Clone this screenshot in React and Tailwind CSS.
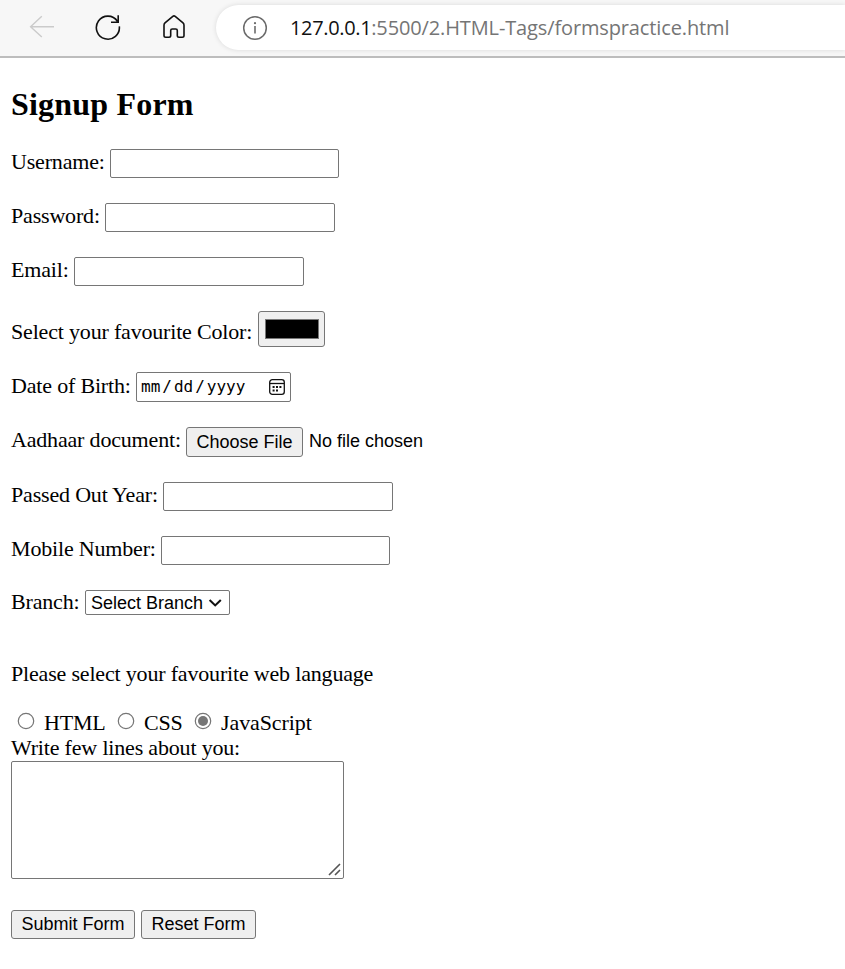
const serif = "font-['Liberation_Serif','Times_New_Roman',serif]";
const sans = "font-['Liberation_Sans',Arial,sans-serif]";

function Row({ label, labelClass, className, children }) {
  return (
    <div className={`flex items-start ${className}`}>
      <label className={`shrink-0 whitespace-nowrap leading-6 ${labelClass}`}>{label}</label>
      {children}
    </div>
  );
}

function TextBox({ type = "text", className }) {
  return <input type={type} className={`block h-[29px] shrink-0 rounded-[2px] border border-[#767676] bg-white px-1 outline-none ${className}`} />;
}

function Button({ className, children }) {
  return (
    <button type="button" className={`flex shrink-0 items-center justify-center whitespace-nowrap rounded-[3px] border border-[#767676] bg-[#efefef] text-[18px] leading-5 tracking-normal ${sans} ${className}`}>
      {children}
    </button>
  );
}

function Radio({ className, checked }) {
  return (
    <svg className={`mt-[1px] shrink-0 ${className}`} width="18" height="18" viewBox="0 0 18 18" fill="none">
      <circle cx="9" cy="9" r="7.7" stroke="#767676" strokeWidth="1.2" />
      {checked && <circle cx="9" cy="9" r="5" fill="#767676" />}
    </svg>
  );
}

function Toolbar() {
  return (
    <header className="flex h-[58px] items-start overflow-hidden border-b-2 border-[#bdbdbd] bg-[#f7f7f7] pt-[5px]">
      <svg className="ml-[28px] mt-[8px] shrink-0" width="28" height="28" viewBox="28 13 28 28" fill="none" stroke="#cbcbcb" strokeWidth="1.4">
        <path d="M41.8 16.3 30.6 26.7 41.8 37M30.6 26.7H54" />
      </svg>
      <svg className="ml-[38px] mt-[8px] shrink-0" width="28" height="28" viewBox="94 13 28 28" fill="none" stroke="#111" strokeWidth="1.6">
        <path d="M119.3 26.3A11.5 11.5 0 1 1 117.4 21.2M118.2 15.2V22.3H111" />
      </svg>
      <svg className="ml-[38px] mt-[8px] shrink-0" width="28" height="28" viewBox="160 13 28 28" fill="none" stroke="#111" strokeWidth="1.6" strokeLinejoin="round">
        <path d="M164 25.2Q164 23.8 165 22.9L172.8 16.4Q174 15.4 175.2 16.4L183 22.9Q184 23.8 184 25.2V35.5Q184 37.2 182.3 37.2H179Q177.3 37.2 177.3 35.5V30.6Q177.3 29 175.7 29H172.3Q170.7 29 170.7 30.6V35.5Q170.7 37.2 169 37.2H165.7Q164 37.2 164 35.5Z" />
      </svg>
      <div className="ml-[28px] flex h-[45px] grow items-center rounded-l-full bg-white shadow-[0_0_5px_rgba(0,0,0,0.12)]">
        <svg className="ml-[26px] shrink-0" width="26" height="26" viewBox="0 0 26 26" fill="none" stroke="#6b6b6b" strokeWidth="1.5">
          <circle cx="13" cy="13" r="11.3" />
          <path d="M13 11V18.5" strokeWidth="1.6" />
          <circle cx="13" cy="8.2" r="1.1" fill="#6b6b6b" stroke="none" />
        </svg>
        <div className="ml-[22px] whitespace-nowrap font-['Open_Sans','Noto_Sans',sans-serif] text-[20px] leading-6 tracking-[-0.13px] text-[#757575]">
          <span className="tracking-[-0.35px] text-[#111]">127.0.0.1</span>:5500/2.HTML-Tags/formspractice.html
        </div>
      </div>
    </header>
  );
}

export default function App() {
  return (
    <div className={`h-[969px] w-[845px] overflow-hidden bg-white text-[22px] tracking-[-0.18px] text-black ${serif}`}>
      <Toolbar />
      <form className="pl-[11px]">
        <h2 className="h-[91px] whitespace-nowrap pt-[28px] text-[32px] font-bold leading-9 tracking-[0.2px]">Signup Form</h2>
        <Row label="Username:" labelClass="w-[99px] mt-[1px]" className="h-[54px]">
          <TextBox className="w-[229px]" />
        </Row>
        <Row label="Password:" labelClass="w-[94px] mt-[1px]" className="h-[54px]">
          <TextBox type="password" className="w-[230px]" />
        </Row>
        <Row label="Email:" labelClass="w-[63px] mt-[1px]" className="h-[54px]">
          <TextBox type="email" className="w-[230px]" />
        </Row>
        <Row label="Select your favourite Color:" labelClass="w-[247px] mt-[9px]" className="h-[61px]">
          <div className="h-9 w-[67px] rounded-[3px] border border-[#767676] bg-[#efefef] px-[6px] py-[7px]">
            <div className="h-5 w-[54px] border border-[#777] bg-black" />
          </div>
        </Row>
        <Row label="Date of Birth:" labelClass="w-[125px] mt-[2px]" className="h-[55px]">
          <div className="flex h-[30px] w-[155px] items-center rounded-[2px] border border-[#767676] pl-[4px] font-['DejaVu_Sans_Mono',monospace] text-[16px] tracking-normal">
            <span>mm</span>
            <span className="mx-[2px]">/</span>
            <span>dd</span>
            <span className="mx-[2px]">/</span>
            <span>yyyy</span>
            <svg className="ml-auto mr-[5px] shrink-0" width="16" height="16" viewBox="0 0 16 16" fill="none">
              <rect x=".7" y=".7" width="14.6" height="14.6" rx="2.6" stroke="#111" strokeWidth="1.3" />
              <path d="M1 4.5H15" stroke="#111" strokeWidth="1.3" />
              <path d="M3.6 8H5.6M7 8H9M10.4 8H12.4M3.6 11.5H5.6M7 11.5H9" stroke="#111" strokeWidth="1.8" />
            </svg>
          </div>
        </Row>
        <Row label="Aadhaar document:" labelClass="w-[175px] mt-[1px]" className="h-[55px]">
          <Button className="h-[30px] w-[117px]">Choose File</Button>
          <span className={`ml-[6px] mt-[4px] whitespace-nowrap text-[18px] leading-5 tracking-normal ${sans}`}>No file chosen</span>
        </Row>
        <Row label="Passed Out Year:" labelClass="w-[152px] mt-[1px]" className="h-[54px]">
          <TextBox className="w-[230px]" />
        </Row>
        <Row label="Mobile Number:" labelClass="w-[150px] mt-[1px]" className="h-[54px]">
          <TextBox className="w-[229px]" />
        </Row>
        <Row label="Branch:" labelClass="w-[74px]" className="h-[72px]">
          <div className={`flex h-[25px] w-[145px] items-center rounded-[2px] border border-[#767676] pl-[5px] text-[18px] leading-5 tracking-normal ${sans}`}>
            <span className="whitespace-nowrap">Select Branch</span>
            <svg className="ml-auto mr-[7px] shrink-0" width="14" height="10" viewBox="0 0 14 10" fill="none">
              <path d="M1.6 2 7.2 7.4 12.8 2" stroke="#111" strokeWidth="2.1" />
            </svg>
          </div>
        </Row>
        <p className="h-[49px] whitespace-nowrap leading-6">Please select your favourite web language</p>
        <div className="flex h-[25px] items-start whitespace-nowrap leading-6">
          <Radio className="ml-[6px]" />
          <span className="ml-[9px] w-[64px]">HTML</span>
          <Radio className="ml-[9px]" />
          <span className="ml-[9px] w-[41px]">CSS</span>
          <Radio className="ml-[9px]" checked />
          <span className="ml-[9px] tracking-[-0.1px]">JavaScript</span>
        </div>
        <p className="h-[25px] whitespace-nowrap leading-6">Write few lines about you:</p>
        <div className="flex h-[118px] w-[333px] items-end justify-end rounded-[2px] border border-[#767676]">
          <svg className="mb-[2px] mr-[2px]" width="13" height="13" viewBox="0 0 13 13" fill="none" stroke="#555" strokeWidth="1.6">
            <path d="M1 12 12 1M7 12 12 7" />
          </svg>
        </div>
        <div className="mt-[31px] flex gap-[6px]">
          <Button className="h-[29px] w-[124px] pb-[2px]">Submit Form</Button>
          <Button className="h-[29px] w-[115px] pb-[2px]">Reset Form</Button>
        </div>
      </form>
    </div>
  );
}
